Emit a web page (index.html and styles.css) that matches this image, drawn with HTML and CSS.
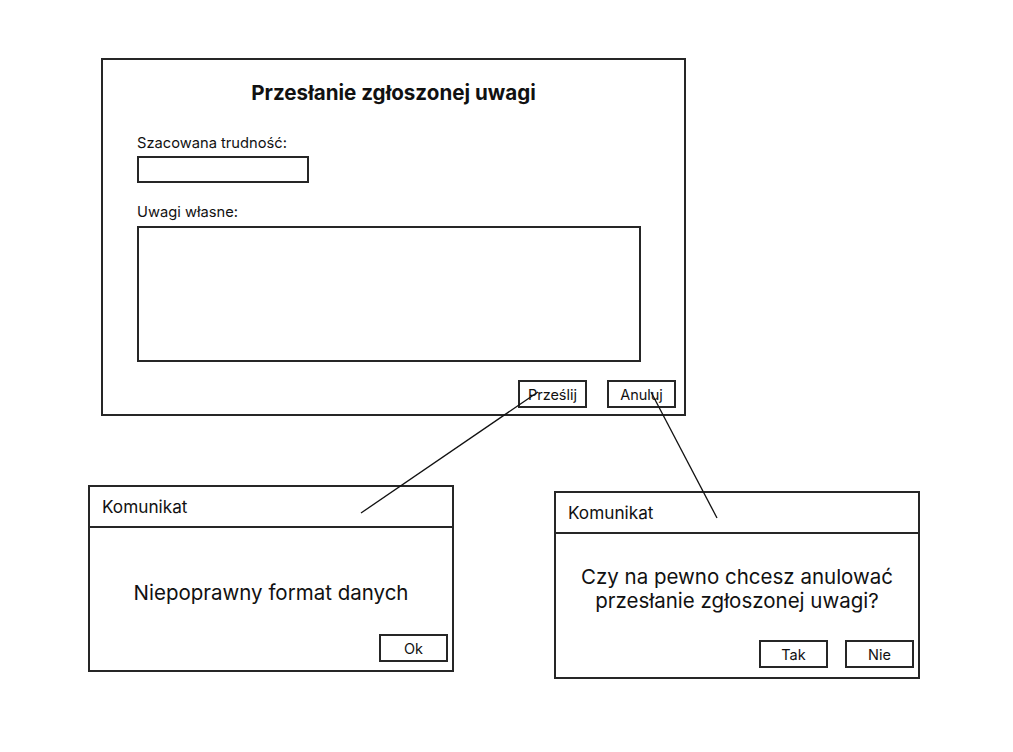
FILE: index.html
```html
<!DOCTYPE html>
<html lang="pl">
<head>
  <meta charset="UTF-8" />
  <meta name="viewport" content="width=device-width, initial-scale=1" />
  <title>Przesłanie zgłoszonej uwagi</title>
  <link rel="stylesheet" href="styles.css">
</head>
<body>
  <div class="canvas">
    <div class="window main-window">
      <h1 class="title">Przesłanie zgłoszonej uwagi</h1>
      <label class="field-label">Szacowana trudność:</label>
      <div class="input-box"></div>
      <label class="field-label second">Uwagi własne:</label>
      <div class="text-box"></div>
      <div class="actions">
        <button class="btn">Prześlij</button>
        <button class="btn">Anuluj</button>
      </div>
    </div>

    <div class="window dialog dialog-error">
      <div class="dialog-header">Komunikat</div>
      <div class="dialog-body">
        <p class="message">Niepoprawny format danych</p>
        <div class="actions">
          <button class="btn">Ok</button>
        </div>
      </div>
    </div>

    <div class="window dialog dialog-confirm">
      <div class="dialog-header">Komunikat</div>
      <div class="dialog-body">
        <p class="message">Czy na pewno chcesz anulować<br>przesłanie zgłoszonej uwagi?</p>
        <div class="actions">
          <button class="btn">Tak</button>
          <button class="btn">Nie</button>
        </div>
      </div>
    </div>

    <!-- connectors between the buttons and the dialogs -->
    <svg class="links" width="1013" height="752" viewBox="0 0 1013 752">
      <line x1="538" y1="392" x2="361" y2="513" />
      <line x1="651" y1="392" x2="717" y2="518" />
    </svg>
  </div>
</body>
</html>
```

FILE: styles.css
```css
* {
  box-sizing: border-box;
}
body {
  margin: 0;
  background: #fff;
  font-family: Inter, "Noto Sans", sans-serif;
  color: #111;
}
.canvas {
  position: relative;
  width: 1013px;
  height: 752px;
}
.window {
  position: absolute;
  border: 2px solid #262626;
  background: #fff;
  display: flex;
  flex-direction: column;
}
.main-window {
  left: 101px;
  top: 58px;
  width: 585px;
  height: 358px;
  padding: 21px 8px 0 34px;
}
.title {
  margin: 0;
  font-size: 20.6px;
  line-height: 24px;
  font-weight: 700;
  text-align: center;
  padding-right: 26px;
}
.field-label {
  display: block;
  margin-top: 30px;
  font-size: 14.7px;
  line-height: 17px;
}
.field-label.second {
  margin-top: 21px;
}
.input-box {
  margin-top: 4px;
  width: 172px;
  height: 27px;
  border: 2px solid #262626;
}
.text-box {
  margin-top: 5px;
  width: 504px;
  height: 136px;
  border: 2px solid #262626;
}
.actions {
  display: flex;
  justify-content: flex-end;
  gap: 20px;
}
.main-window .actions {
  margin-top: 18px;
}
.btn {
  width: 69px;
  height: 28px;
  padding: 0;
  border: 2px solid #262626;
  background: #fff;
  font-family: inherit;
  font-size: 14.5px;
  color: #111;
}
.dialog {
  width: 366px;
}
.dialog-error {
  left: 88px;
  top: 485px;
  height: 187px;
}
.dialog-confirm {
  left: 554px;
  top: 491px;
  height: 188px;
}
.dialog-header {
  height: 41px;
  padding-left: 12px;
  border-bottom: 2px solid #262626;
  font-size: 17.2px;
  line-height: 39px;
}
.dialog-body {
  flex: 1;
  display: flex;
  flex-direction: column;
  padding: 0 4px 8px 0;
}
.message {
  margin: 0;
  font-size: 20.5px;
  line-height: 24px;
  text-align: center;
  padding-left: 4px;
}
.dialog-error .dialog-body {
  padding-top: 53px;
}
.dialog-confirm .dialog-body {
  padding-top: 31px;
  padding-bottom: 9px;
}
.dialog .actions {
  margin-top: auto;
  gap: 17px;
}
.links {
  position: absolute;
  left: 0;
  top: 0;
  pointer-events: none;
}
.links line {
  stroke: #111;
  stroke-width: 1.3;
}
```
